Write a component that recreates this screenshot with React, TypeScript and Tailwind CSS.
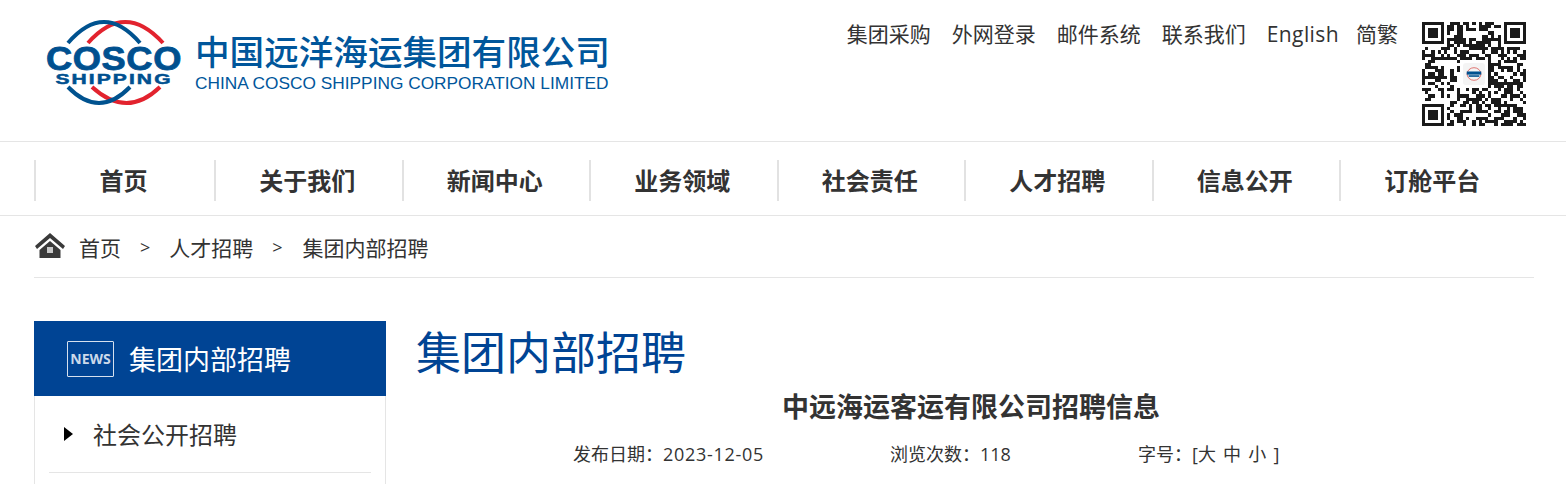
import type { ReactNode } from "react";

const FONT = "font-['Open_Sans','Noto_Sans_CJK_SC',sans-serif]";

const TOP_LINKS = ["集团采购", "外网登录", "邮件系统", "联系我们"];
const NAV_ITEMS = ["关于我们", "新闻中心", "业务领域", "社会责任", "人才招聘", "信息公开", "订舱平台"];
const COLON = "\uFF1A";

function Logo() {
  return (
    <div className="relative w-[134px] h-[90px] shrink-0">
      <svg viewBox="0 0 134 90" className="w-[134px] h-[90px]" fill="none" strokeWidth="4">
        <path d="M41 25 Q 78 -17 116 25" stroke="#e2232e" />
        <path d="M21 25 Q 57 -17 93 25" stroke="#00528f" />
        <path d="M45 69 Q 80 101 113 69" stroke="#e2232e" />
        <path d="M21 69 Q 52 101 83 69" stroke="#00528f" />
      </svg>
      <span className="absolute left-0 top-[29px] w-[134px] text-center font-['Liberation_Sans',sans-serif] font-bold text-[33px] leading-[24px] tracking-[0.5px] scale-x-[1.1] text-[#00508f] [-webkit-text-stroke:0.8px_#00508f]">
        COSCO
      </span>
      <span className="absolute left-0 top-[55px] w-[134px] text-center font-['Liberation_Sans',sans-serif] font-bold text-[15px] leading-[12px] tracking-[1.5px] scale-x-[1.4] text-[#00508f] [-webkit-text-stroke:0.5px_#00508f]">
        SHIPPING
      </span>
    </div>
  );
}

function QrCode() {
  const n = 33;
  const cells: ReactNode[] = [];
  const inFinder = (x: number, y: number) =>
    (x < 8 && y < 8) || (x >= n - 8 && y < 8) || (x < 8 && y >= n - 8);
  const inCenter = (x: number, y: number) => x >= 12 && x <= 20 && y >= 12 && y <= 20;
  for (let y = 0; y < n; y++) {
    for (let x = 0; x < n; x++) {
      if (inFinder(x, y) || inCenter(x, y)) continue;
      const h = Math.sin(x * 12.9898 + y * 78.233) * 43758.5453;
      if (h - Math.floor(h) > 0.5) {
        cells.push(<rect key={`${x}-${y}`} x={x} y={y} width="1" height="1" />);
      }
    }
  }
  const finders = [
    [0, 0],
    [n - 7, 0],
    [0, n - 7],
  ];
  return (
    <svg viewBox="0 0 33 33" className="w-[104px] h-[104px] shrink-0" fill="#1a1a1a" shapeRendering="crispEdges">
      {cells}
      {finders.map(([x, y]) => (
        <g key={`${x}-${y}`}>
          <path d={`M${x} ${y}h7v7h-7z M${x + 1} ${y + 1}v5h5v-5z`} fillRule="evenodd" />
          <rect x={x + 2} y={y + 2} width="3" height="3" />
        </g>
      ))}
      <g shapeRendering="auto">
        <rect x="13" y="13" width="7" height="7" rx="1" fill="#f4f4f4" />
        <ellipse cx="16.5" cy="16.5" rx="2.2" ry="2" fill="none" stroke="#d9534f" strokeWidth="0.25" />
        <rect x="14.2" y="15.7" width="4.6" height="1" fill="#00508f" />
        <rect x="14.8" y="16.9" width="3.4" height="0.5" fill="#00508f" />
      </g>
    </svg>
  );
}

function HomeIcon() {
  return (
    <svg viewBox="0 0 32 28" className="w-[32px] h-[28px] shrink-0">
      <path d="M16 1 L31 14 L29 17 L16 6 L3 17 L1 14 Z" fill="#3a3a3a" />
      <path d="M5.5 18 L16 9 L26.5 18 V26 H5.5 Z" fill="#3a3a3a" />
      <rect x="13" y="15" width="6" height="6" fill="#c9c9c9" />
    </svg>
  );
}

export default function App() {
  return (
    <div className={`${FONT} h-[484px] overflow-hidden bg-white text-[#333]`}>
      {/* Header */}
      <header className="h-[142px] border-b border-[#e5e5e5] flex items-start justify-between pl-[47px] pr-[40px]">
        <div className="flex items-start pt-[18px]">
          <Logo />
          <div className="ml-[14px] mt-[14px] text-[#00569b]">
            <div className="text-[34.6px] leading-[40px] font-medium whitespace-nowrap">中国远洋海运集团有限公司</div>
            <div className="font-['Liberation_Sans',sans-serif] text-[17.3px] leading-[20px] mt-[1px] whitespace-nowrap">
              CHINA COSCO SHIPPING CORPORATION LIMITED
            </div>
          </div>
        </div>
        <div className="flex items-start">
          <div className="flex gap-[21px] pt-[19px] text-[21px] leading-[30px]">
            {TOP_LINKS.map((t) => (
              <a key={t} className="whitespace-nowrap">
                {t}
              </a>
            ))}
            <a className="whitespace-nowrap tracking-[0.4px] mr-[-4px]">English</a>
            <a className="whitespace-nowrap">简繁</a>
          </div>
          <div className="ml-[24px] pt-[22px]">
            <QrCode />
          </div>
        </div>
      </header>

      {/* Nav */}
      <nav className="h-[74px] border-b border-[#e5e5e5] pl-[34px] pt-[18px] flex items-start">
        <a className="w-[180px] h-[41px] border-l-2 border-[#e2e2e2] pr-[3px] text-center text-[24px] leading-[42px] font-bold">
          首页
        </a>
        {NAV_ITEMS.map((t) => (
          <a
            key={t}
            className="w-[187.5px] h-[41px] border-l-2 border-[#e2e2e2] pr-[3px] text-center text-[24px] leading-[42px] font-bold"
          >
            {t}
          </a>
        ))}
      </nav>

      {/* Breadcrumb */}
      <div className="mx-[34px] w-[1500px] h-[62px] border-b border-[#e5e5e5] flex items-center text-[21px] leading-[32px]">
        <span className="mt-[-1px] flex"><HomeIcon /></span>
        <span className="ml-[13px] translate-y-px">首页</span>
        <span className="ml-[19px] text-[18px]">&gt;</span>
        <span className="ml-[19px] translate-y-px">人才招聘</span>
        <span className="ml-[19px] text-[18px]">&gt;</span>
        <span className="ml-[20px] translate-y-px">集团内部招聘</span>
      </div>

      {/* Body */}
      <div className="flex pl-[34px] pt-[43px]">
        <aside className="w-[352px] shrink-0">
          <div className="h-[75px] bg-[#004494] flex items-center pl-[33px] text-white">
            <span className="w-[47px] h-[36px] border border-[#d5e0ee] rounded-[1px] flex items-center justify-center font-['Open_Sans',sans-serif] font-bold text-[14px] text-[#cbd9ea]">
              NEWS
            </span>
            <span className="ml-[15px] text-[27px] leading-[40px] translate-y-px">集团内部招聘</span>
          </div>
          <div className="h-[100px] border-x border-[#e5e5e5] px-[14px]">
            <div className="h-[77px] border-b border-[#e5e5e5] flex items-center">
              <span className="ml-[15px] w-0 h-0 border-y-[7px] border-y-transparent border-l-[9px] border-l-black" />
              <span className="ml-[20px] text-[24px] leading-[36px] translate-y-px">社会公开招聘</span>
            </div>
          </div>
        </aside>
        <main className="ml-[30px] w-[1110px]">
          <h1 className="text-[45px] leading-[64px] text-[#004494]">集团内部招聘</h1>
          <h2 className="mt-[5px] text-center text-[27px] leading-[34px] font-bold">
            中远海运客运有限公司招聘信息
          </h2>
          <div className="mt-[17px] pl-[157px] flex text-[18px] leading-[26px] text-[#333]">
            <span className="w-[317px]">
              {`发布日期${COLON}`}
              <span className="tracking-[0.7px]">2023-12-05</span>
            </span>
            <span className="w-[248px]">{`浏览次数${COLON}118`}</span>
            <span className="[word-spacing:2.5px]">{`字号${COLON}[大 中 小 ]`}</span>
          </div>
        </main>
      </div>
    </div>
  );
}
